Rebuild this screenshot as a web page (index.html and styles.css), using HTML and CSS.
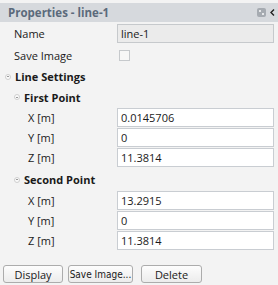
FILE: index.html
```html
<!DOCTYPE html>
<html lang="en">
<head>
  <meta charset="UTF-8">
  <title>Properties - line-1</title>
  <link rel="stylesheet" href="styles.css">
</head>
<body>
  <div class="panel">
    <!-- Title bar -->
    <div class="titlebar">
      <span class="title">Properties - line-1</span>
      <span class="tools">
        <svg class="float-btn" width="9" height="9" viewBox="0 0 9 9">
          <rect x="0" y="0" width="9" height="9" rx="2" fill="#a6abb1"/>
          <path d="M2 2h2v2H2zM5 5h2v2H5z" fill="#e6e8ea"/>
        </svg>
        <svg class="arrow" width="5" height="7" viewBox="0 0 5 7">
          <path d="M4 0.5L1 3.5L4 6.5" fill="none" stroke="#222" stroke-width="1.4"/>
        </svg>
      </span>
    </div>

    <div class="content">
      <div class="row first">
        <span class="label">Name</span>
        <span class="field readonly">line-1</span>
      </div>
      <div class="row check-row">
        <span class="label">Save Image</span>
        <span class="check"></span>
      </div>

      <div class="group lvl0"><span class="toggle"></span>Line Settings</div>
      <div class="group lvl1 top"><span class="toggle"></span>First Point</div>
      <div class="row sub"><span class="label">X [m]</span><span class="field">0.0145706</span></div>
      <div class="row sub"><span class="label">Y [m]</span><span class="field">0</span></div>
      <div class="row sub"><span class="label">Z [m]</span><span class="field">11.3814</span></div>

      <div class="group lvl1 second"><span class="toggle"></span>Second Point</div>
      <div class="row sub"><span class="label">X [m]</span><span class="field">13.2915</span></div>
      <div class="row sub"><span class="label">Y [m]</span><span class="field">0</span></div>
      <div class="row sub"><span class="label">Z [m]</span><span class="field">11.3814</span></div>

      <div class="buttons">
        <button class="btn">Display</button>
        <button class="btn mono">Save Image...</button>
        <button class="btn wide-gap">Delete</button>
      </div>
    </div>
  </div>
</body>
</html>
```

FILE: styles.css
```css
body {
  margin: 0;
  background-color: #f3f3f3;
  font-family: "Open Sans", "Noto Sans", sans-serif;
  font-size: 11px;
  color: #1a1a1a;
}

.panel {
  width: 278px;
  height: 285px;
  overflow: hidden;
}

/* Title bar */
.titlebar {
  display: flex;
  align-items: center;
  justify-content: space-between;
  height: 19px;
  margin-top: 3px;
  padding: 0 3px 0 8px;
  background-color: #d6d9dd;
}

.title {
  font-weight: bold;
  font-size: 11.5px;
  color: #5b6a7b;
}

.tools {
  display: flex;
  align-items: center;
  gap: 4px;
}

/* Property rows */
.content {
  padding-top: 2px;
}

.row {
  display: flex;
  align-items: center;
  height: 19px;
  margin-bottom: 1px;
  padding-right: 4px;
}

.row.check-row {
  height: 23px;
  margin-bottom: 0;
}

.label {
  width: 103px;
  padding-left: 14px;
}

.row.sub .label {
  padding-left: 28px;
  width: 89px;
}

.field {
  box-sizing: border-box;
  flex: 1;
  height: 19px;
  line-height: 17px;
  padding-left: 3px;
  background-color: #ffffff;
  border: 1px solid #c9cdd2;
}

.field.readonly {
  background-color: #ebebeb;
  border-color: #c6c9cc;
}

.check {
  box-sizing: border-box;
  width: 11px;
  height: 11px;
  margin-left: 2px;
  border: 1px solid #c6c9cc;
  background-color: #f7f7f7;
}

/* Collapsible groups */
.group {
  display: flex;
  align-items: center;
  height: 19px;
  font-weight: bold;
}

.group.lvl0 {
  padding-left: 5px;
}

.group.lvl1 {
  padding-left: 14px;
  height: 22px;
}

.group.second {
  height: 23px;
}

.toggle {
  position: relative;
  box-sizing: border-box;
  width: 6px;
  height: 6px;
  margin-right: 4px;
  border: 1px solid #cfcfcf;
  border-radius: 50%;
  background-color: #fafafa;
}

.toggle::after {
  content: "";
  position: absolute;
  left: 1px;
  top: 1.5px;
  width: 2px;
  height: 1px;
  background-color: #9a9a9a;
}

/* Bottom buttons */
.buttons {
  display: flex;
  gap: 5px;
  padding: 14px 0 0 3px;
}

.btn {
  height: 18px;
  width: 60px;
  padding: 0;
  white-space: nowrap;
  font-family: "Open Sans", "Noto Sans", sans-serif;
  font-size: 11px;
  color: #1a1a1a;
  background: linear-gradient(#fdfdfd, #ececec);
  border: 1px solid #acacac;
  border-radius: 3px;
}

.btn.mono {
  width: 65px;
  font-family: "DejaVu Sans Condensed", "DejaVu Sans", sans-serif;
  font-size: 10px;
}

.btn.wide-gap {
  margin-left: 3px;
  width: 61px;
}
```
